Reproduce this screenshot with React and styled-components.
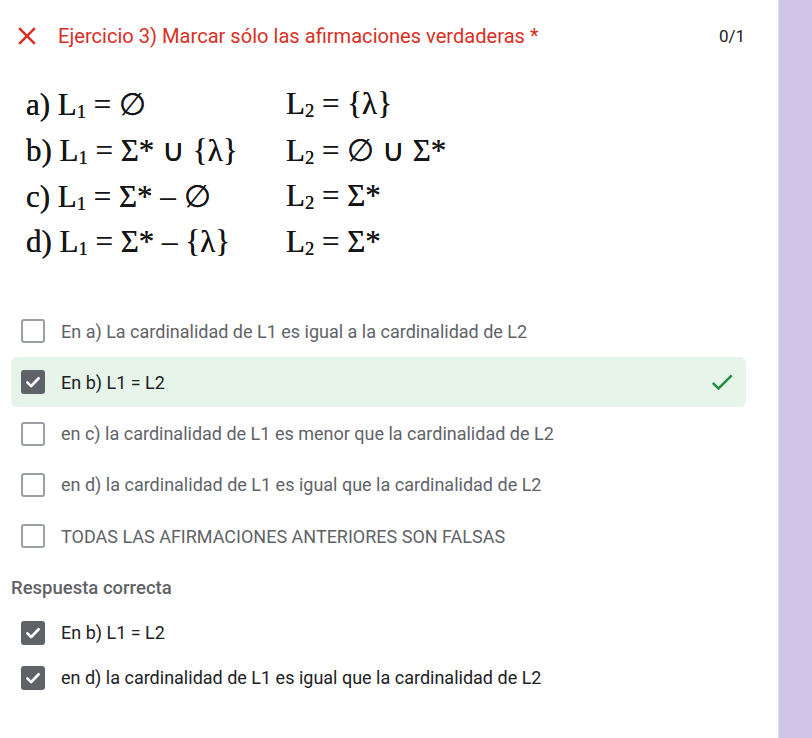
import React from 'react'
import styled, { createGlobalStyle } from 'styled-components';

const GlobalStyle = createGlobalStyle`
  html, body {
    margin: 0;
    padding: 0;
    background: #ffffff;
  }
  body {
    font-family: Roboto, "Liberation Sans", Arial, sans-serif;
  }
`;

const Page = styled.div`
  display: flex;
  min-height: 738px;
`;

const Card = styled.div`
  width: 779px;
  border-right: 1px solid #dadce0;
  background: #ffffff;
  padding: 0 0 40px 0;
  box-sizing: border-box;
`;

const SideBar = styled.div`
  flex: 1;
  background: #d1c4e9;
`;

const Header = styled.div`
  display: flex;
  align-items: center;
  height: 36px;
  margin-top: 18px;
  padding: 0 33px 0 12px;
`;

const Title = styled.div`
  flex: 1;
  margin-left: 16px;
  font-size: 20.1px;
  color: #d93025;
`;

const Score = styled.div`
  font-size: 17px;
  color: #202124;
`;

const Formula = styled.div`
  display: grid;
  grid-template-columns: 260px auto;
  grid-auto-rows: 46px;
  align-items: center;
  padding: 0 0 0 26px;
  margin-top: 27px;
  font-family: "Liberation Serif", "Times New Roman", serif;
  font-size: 31px;
  color: #151515;
  text-shadow: 0 0 0.6px #151515;
  sub {
    font-size: 60%;
    vertical-align: -3px;
    line-height: 0;
  }
`;

const Options = styled.div`
  display: flex;
  flex-direction: column;
  gap: 1.3px;
  margin-top: 41px;
  padding: 0 32px 0 11px;
`;

const Option = styled.div`
  display: flex;
  align-items: center;
  height: 50px;
  padding: 0 10px;
  border-radius: 6px;
  background: ${p => (p.$correct ? '#e6f4ea' : 'transparent')};
`;

const Box = styled.div`
  width: 24px;
  height: 24px;
  box-sizing: border-box;
  border-radius: 3px;
  border: 2.5px solid ${p => (p.$checked ? '#5f6368' : '#9aa0a6')};
  background: ${p => (p.$checked ? '#5f6368' : '#ffffff')};
  display: flex;
  align-items: center;
  justify-content: center;
  flex-shrink: 0;
`;

const Label = styled.div`
  flex: 1;
  margin-left: 16px;
  font-size: 18px;
  color: ${p => (p.$dark ? '#202124' : '#5f6368')};
`;

const Section = styled.div`
  margin-top: 16px;
  padding: 0 11px;
  font-size: 18.5px;
  font-weight: 500;
  color: #5f6368;
`;

const Answers = styled.div`
  display: flex;
  flex-direction: column;
  gap: 10px;
  margin-top: 16px;
  padding: 0 21px;
`;

const Answer = styled.div`
  display: flex;
  align-items: center;
  height: 35px;
`;

const CloseIcon = () => (
  <svg width="30" height="30" viewBox="0 0 24 24">
    <path fill="#d93025" d="M19 6.41L17.59 5 12 10.59 6.41 5 5 6.41 10.59 12 5 17.59 6.41 19 12 13.41 17.59 19 19 17.59 13.41 12z" />
  </svg>
);

const TickIcon = () => (
  <svg width="28" height="28" viewBox="0 0 24 24">
    <path fill="#1e8e3e" d="M9 16.17L4.83 12l-1.42 1.41L9 19 21 7l-1.41-1.41z" />
  </svg>
);

const BoxCheck = () => (
  <svg width="18" height="18" viewBox="0 0 24 24">
    <polyline points="4.5,12.5 9.5,17.5 19.5,7" fill="none" stroke="#ffffff" strokeWidth="3.6" strokeLinecap="round" strokeLinejoin="round" />
  </svg>
);

const Checkbox = ({ checked }) => (
  <Box $checked={checked}>{checked && <BoxCheck />}</Box>
);

const options = [
  { text: 'En a) La cardinalidad de L1 es igual a la cardinalidad de L2' },
  { text: 'En b) L1 = L2', checked: true, correct: true },
  { text: 'en c) la cardinalidad de L1 es menor que la cardinalidad de L2' },
  { text: 'en d) la cardinalidad de L1 es igual que la cardinalidad de L2' },
  { text: 'TODAS LAS AFIRMACIONES ANTERIORES SON FALSAS' },
];

const answers = [
  'En b) L1 = L2',
  'en d) la cardinalidad de L1 es igual que la cardinalidad de L2',
];

const App = () => {
  return (
    <Page>
      <GlobalStyle />
      <Card>
        <Header>
          <CloseIcon />
          <Title>Ejercicio 3) Marcar sólo las afirmaciones verdaderas *</Title>
          <Score>0/1</Score>
        </Header>

        <Formula>
          <div>a) L<sub>1</sub> = ∅</div>
          <div>L<sub>2</sub> = {'{'}λ{'}'}</div>
          <div>b) L<sub>1</sub> = Σ* ∪ {'{'}λ{'}'}</div>
          <div>L<sub>2</sub> = ∅ ∪ Σ*</div>
          <div>c) L<sub>1</sub> = Σ* – ∅</div>
          <div>L<sub>2</sub> = Σ*</div>
          <div>d) L<sub>1</sub> = Σ* – {'{'}λ{'}'}</div>
          <div>L<sub>2</sub> = Σ*</div>
        </Formula>

        <Options>
          {options.map(o => (
            <Option key={o.text} $correct={o.correct}>
              <Checkbox checked={o.checked} />
              <Label $dark={o.checked}>{o.text}</Label>
              {o.correct && <TickIcon />}
            </Option>
          ))}
        </Options>

        <Section>Respuesta correcta</Section>

        <Answers>
          {answers.map(a => (
            <Answer key={a}>
              <Checkbox checked />
              <Label $dark>{a}</Label>
            </Answer>
          ))}
        </Answers>
      </Card>
      <SideBar />
    </Page>
  )
}

export default App
